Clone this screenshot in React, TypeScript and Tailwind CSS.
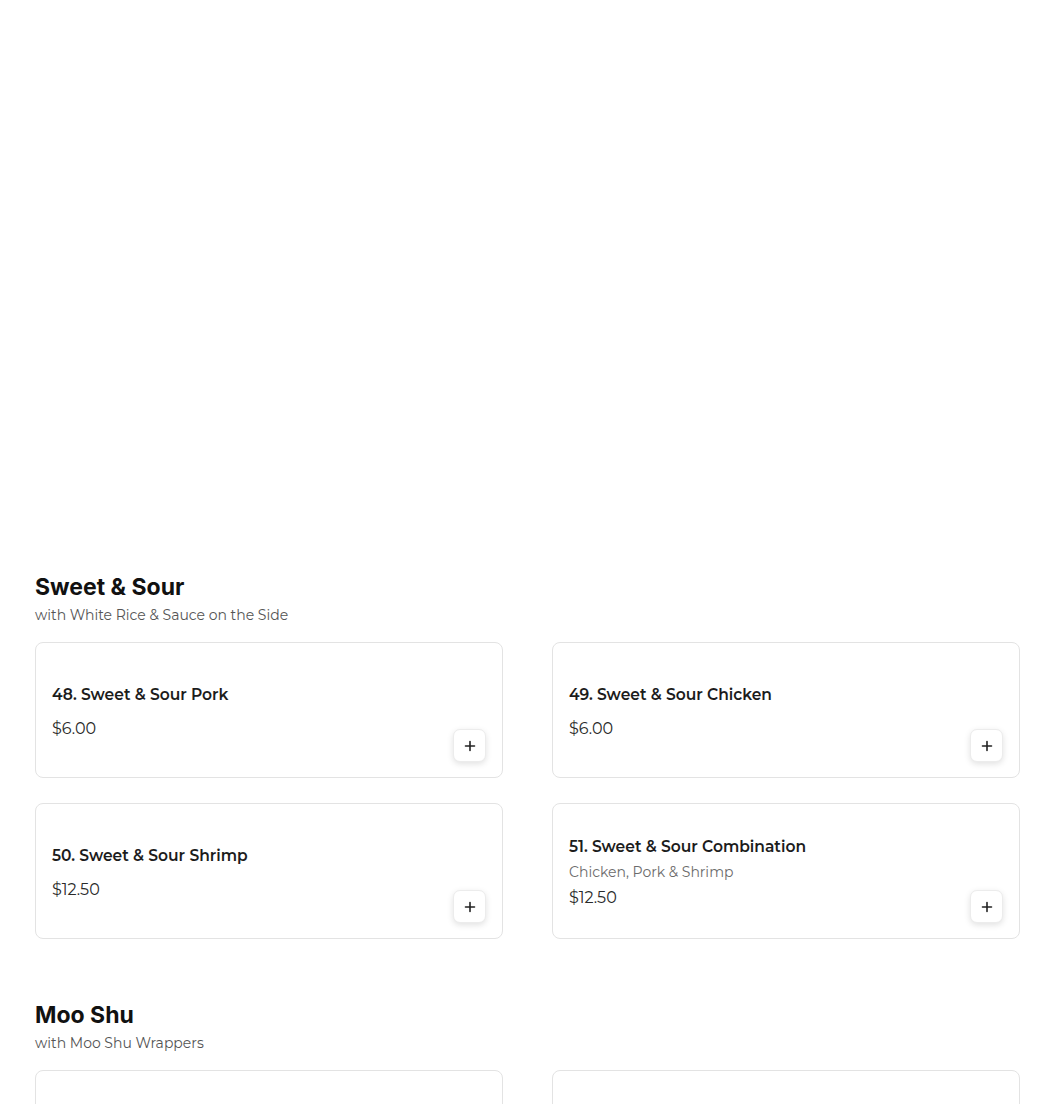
import React from "react";

type Item = { name: string; desc?: string; price: string };

const sweetSour: Item[] = [
  { name: "48. Sweet & Sour Pork", price: "$6.00" },
  { name: "49. Sweet & Sour Chicken", price: "$6.00" },
  { name: "50. Sweet & Sour Shrimp", price: "$12.50" },
  { name: "51. Sweet & Sour Combination", desc: "Chicken, Pork & Shrimp", price: "$12.50" },
];

function PlusIcon() {
  return (
    <svg width="12" height="12" viewBox="0 0 12 12" fill="none">
      <path d="M6 1.5v9M1.5 6h9" stroke="#222" strokeWidth="1.6" strokeLinecap="round" />
    </svg>
  );
}

function Card({ item }: { item?: Item }) {
  return (
    <div
      className={`relative h-[136px] rounded-[8px] border border-[#e3e3e3] bg-white px-4 flex flex-col justify-center ${
        item && item.desc ? "pt-[2px]" : "pt-[4px]"
      }`}
    >
      {item && (
        <>
          <div className="text-[15.5px] font-semibold leading-[22px] text-[#1c1c1c]">{item.name}</div>
          {item.desc && <div className="text-[14px] leading-[20px] text-[#6b6b6b] mt-[4px]">{item.desc}</div>}
          <div className={`text-[16px] leading-[22px] text-[#2a2a2a] ${item.desc ? "mt-[5px]" : "mt-[12px]"}`}>{item.price}</div>
          <button className="absolute right-[16px] bottom-[15px] w-[33px] h-[33px] rounded-[7px] border border-[#ececec] bg-white shadow-[0_2px_6px_rgba(0,0,0,0.12)] flex items-center justify-center">
            <PlusIcon />
          </button>
        </>
      )}
    </div>
  );
}

export default function App() {
  return (
    <div className="bg-white min-h-[1104px] pl-[35px] pr-[30px] pt-[571px]" style={{ fontFamily: "Montserrat, Inter, 'Noto Sans', sans-serif" }}>
      <section>
        <h2 className="text-[23px] font-bold leading-[32px] text-[#111]" style={{ fontFamily: "Inter, 'Noto Sans', sans-serif" }}>Sweet &amp; Sour</h2>
        <p className="text-[14px] leading-[20px] text-[#555] mt-[2px]">with White Rice &amp; Sauce on the Side</p>
        <div className="mt-[17px] grid grid-cols-2 gap-x-[49px] gap-y-[25px]">
          {sweetSour.map((it) => (
            <Card key={it.name} item={it} />
          ))}
        </div>
      </section>
      <section className="mt-[60px]">
        <h2 className="text-[23px] font-bold leading-[32px] text-[#111]" style={{ fontFamily: "Inter, 'Noto Sans', sans-serif" }}>Moo Shu</h2>
        <p className="text-[14px] leading-[20px] text-[#555] mt-[2px]">with Moo Shu Wrappers</p>
        <div className="mt-[17px] grid grid-cols-2 gap-x-[49px] gap-y-[25px]">
          <Card />
          <Card />
        </div>
      </section>
    </div>
  );
}
